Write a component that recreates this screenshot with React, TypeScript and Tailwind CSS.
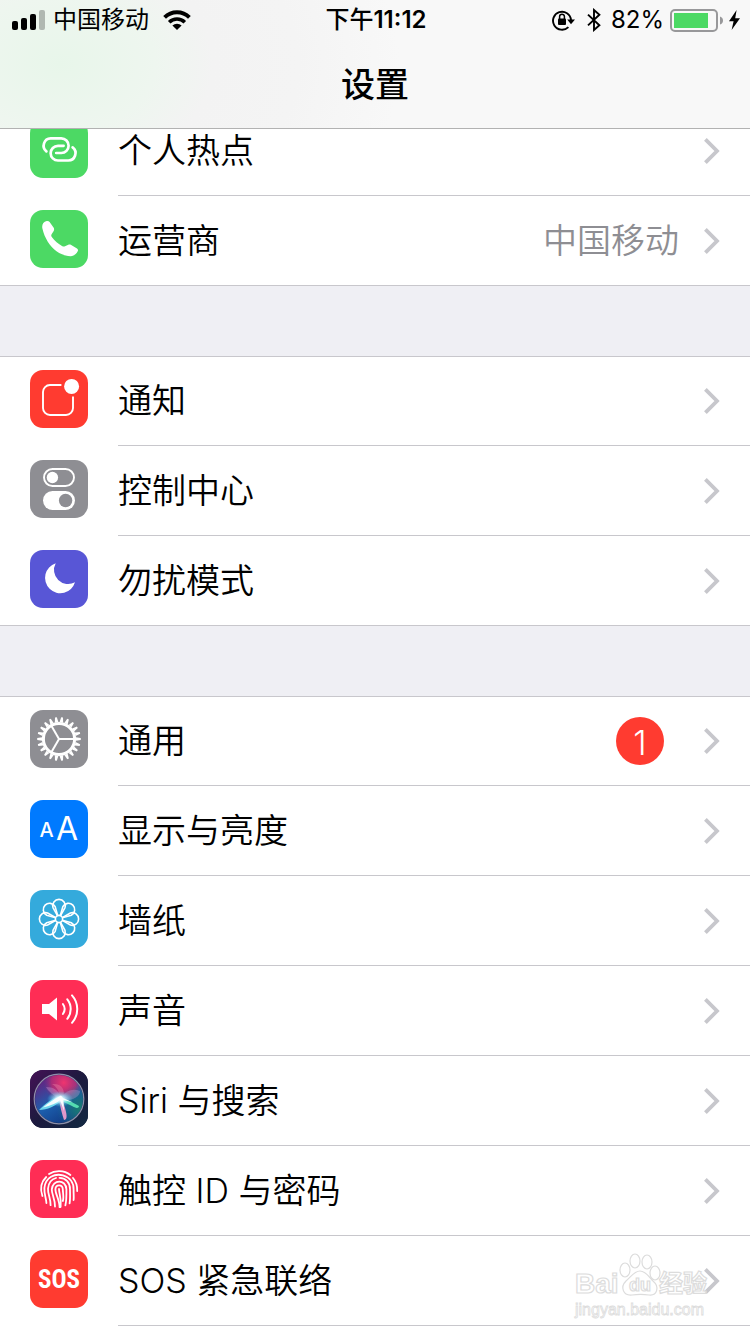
import type { ReactNode } from "react";

type Item = {
  label: string;
  tile: string;
  icon: ReactNode;
  value?: string;
  badge?: number;
};

const gearTeeth = Array.from({ length: 22 }, (_, i) => (i * 360) / 22);
const petals = [0, 45, 90, 135, 180, 225, 270, 315];

function Glyph({ children }: { children: ReactNode }) {
  return (
    <svg viewBox="0 0 58 58" className="size-full" fill="none" aria-hidden="true">
      {children}
    </svg>
  );
}

const hotspotIcon = (
  <Glyph>
    <g stroke="#fff" strokeWidth="2.7" strokeLinecap="round">
      <path d="M16.4 31.4A7.3 7.3 0 0 1 20.7 18.4H31.3A7.3 7.3 0 0 1 31.3 33H26.2" />
      <path d="M42.6 27.4A7.3 7.3 0 0 1 38.3 40.5H28A7.3 7.3 0 0 1 28 25.8H33.6" />
    </g>
  </Glyph>
);

const phoneIcon = (
  <Glyph>
    <path
      fill="#fff"
      d="M16.7 11C18 10.8 19 11.2 19.6 12L23.7 17.8C24.3 18.9 24.2 20 23.7 21L21.6 24.2C21 25.2 21.2 26.2 21.8 27.1C24.5 31 28.6 34.2 32 36C33.1 36.6 34 36.7 35 36.3L38.3 34.7C39.2 34.3 40 34.3 40.8 34.8L47 38.6C48 39.3 48.3 40.2 47.7 41.3C46.2 44.3 43.4 46.3 40.5 46.2C35.5 46 30.5 44.3 26.5 41.3C20 36.5 14.5 28 12.4 18.5C11.6 14.8 13.2 11.7 16.7 11Z"
    />
  </Glyph>
);

const notificationIcon = (
  <Glyph>
    <path
      stroke="#fff"
      strokeWidth="1.9"
      d="M31.4 15H20A7 7 0 0 0 13 22V38A7 7 0 0 0 20 45H36A7 7 0 0 0 43 38V26.6"
    />
    <circle cx="41.6" cy="16.4" r="7.5" fill="#fff" />
  </Glyph>
);

const controlIcon = (
  <Glyph>
    <rect x="14" y="9" width="30" height="17" rx="8.5" stroke="#fff" strokeWidth="1.9" />
    <circle cx="22.4" cy="17.5" r="5.7" fill="#fff" />
    <rect x="13" y="31" width="32" height="19" rx="9.5" fill="#fff" />
    <circle cx="35.6" cy="40.5" r="6.7" fill="#8e8e93" />
  </Glyph>
);

const moonIcon = (
  <Glyph>
    <path fill="#fff" d="M25.7 13.3A15.3 15.3 0 1 0 45 32.3A14.1 14.1 0 0 1 25.7 13.3Z" />
  </Glyph>
);

const gearIcon = (
  <Glyph>
    <circle cx="29" cy="29" r="15.6" stroke="#fff" strokeWidth="3" />
    {gearTeeth.map((angle) => (
      <path key={angle} fill="#fff" d="M45.8 27.2L50.8 28.1V29.9L45.8 30.8Z" transform={`rotate(${angle} 29 29)`} />
    ))}
    <g stroke="#fff" strokeWidth="2">
      <path d="M29 29H44" />
      <path d="M29 29L21.5 16" />
      <path d="M29 29L21.5 42" />
    </g>
  </Glyph>
);

const displayIcon = (
  <Glyph>
    <text x="9.5" y="37" fill="#fff" fontSize="20" fontWeight="500">A</text>
    <text x="26" y="40" fill="#fff" fontSize="32" fontWeight="400">A</text>
  </Glyph>
);

const wallpaperIcon = (
  <Glyph>
    <g stroke="#fff" strokeWidth="1.6">
      {petals.map((angle) => (
        <path
          key={angle}
          d="M27.6 25.8L23 17.6A6.3 6.3 0 1 1 35 17.6L30.4 25.8"
          transform={`rotate(${angle} 29 29)`}
        />
      ))}
      <circle cx="29" cy="29" r="3.6" />
    </g>
  </Glyph>
);

const soundIcon = (
  <Glyph>
    <path fill="#fff" d="M12 24H19L27 17.6V40.4L19 34H12Z" />
    <g stroke="#fff" strokeWidth="2" strokeLinecap="round">
      <path d="M32.9 24A8.6 8.6 0 0 1 32.9 34" />
      <path d="M37.3 19.4A15.5 15.5 0 0 1 37.3 38.8" />
      <path d="M42 15.4A20.5 20.5 0 0 1 42 42.8" />
    </g>
  </Glyph>
);

const siriIcon = (
  <Glyph>
    <defs>
      <linearGradient id="siri-bg" x1="0" y1="0" x2="1" y2="1">
        <stop offset="0" stopColor="#451156" />
        <stop offset="0.5" stopColor="#1c1a3e" />
        <stop offset="1" stopColor="#122a42" />
      </linearGradient>
      <linearGradient id="siri-orb" x1="0.1" y1="0.2" x2="0.6" y2="1">
        <stop offset="0" stopColor="#5b2a86" />
        <stop offset="0.5" stopColor="#1c5fae" />
        <stop offset="1" stopColor="#123c86" />
      </linearGradient>
      <radialGradient id="siri-red" cx="0.6" cy="0.16" r="0.42">
        <stop offset="0" stopColor="#f0356f" />
        <stop offset="0.6" stopColor="#c22a72" stopOpacity="0.8" />
        <stop offset="1" stopColor="#8a2a80" stopOpacity="0" />
      </radialGradient>
      <radialGradient id="siri-teal" cx="0.95" cy="0.7" r="0.5">
        <stop offset="0" stopColor="#19806f" />
        <stop offset="1" stopColor="#177c83" stopOpacity="0" />
      </radialGradient>
      <radialGradient id="siri-glow">
        <stop offset="0" stopColor="#fff" />
        <stop offset="0.35" stopColor="#c9f6ff" stopOpacity="0.85" />
        <stop offset="1" stopColor="#4bd6f5" stopOpacity="0" />
      </radialGradient>
    </defs>
    <rect width="58" height="58" fill="url(#siri-bg)" />
    <circle cx="29" cy="29" r="24" fill="url(#siri-orb)" />
    <circle cx="29" cy="29" r="24" fill="url(#siri-red)" />
    <circle cx="29" cy="29" r="24" fill="url(#siri-teal)" />
    <path fill="#d9a5dc" fillOpacity="0.35" d="M30 29C24 26 18 21 16 17C23 17 29 20 31 28Z" />
    <path fill="#f08fb0" fillOpacity="0.35" d="M30 28C29 21 27 17 22 14C31 13 36 19 33 28Z" />
    <path fill="#b6a4d8" fillOpacity="0.35" d="M31 27C37 20 43 18 50 21C50 27 42 31 32 30Z" />
    <path fill="#7be9f7" fillOpacity="0.85" d="M30 26C22 28 15 34 9 40C17 40 26 36 32 30Z" />
    <path fill="#f59fd0" fillOpacity="0.9" d="M29 29C30 36 32 44 34 50C37 50 37 46 36 42C35 37 33 32 32 29Z" />
    <path fill="#5ff0b9" fillOpacity="0.85" d="M31 27C37 30 44 33 49 36C49 39 45 38 42 36C38 34 33 32 31 30Z" />
    <ellipse cx="30" cy="29" rx="13" ry="8" fill="url(#siri-glow)" />
    <path fill="#fff" fillOpacity="0.9" d="M31 25.5C24 29 18 33 13 37.5C21 35.5 27 33 30 30L34 41L33.4 30L43 32.5L33 28Z" />
    <circle cx="29" cy="29" r="24.8" stroke="#a9adc4" strokeOpacity="0.8" strokeWidth="1.2" />
  </Glyph>
);

const touchIcon = (
  <Glyph>
    <g stroke="#fff" strokeWidth="1.8" strokeLinecap="round">
      <path d="M19 14C25 10 34 10 40.4 15" />
      <path d="M12.4 36C10 29 11 22 16.2 17" />
      <path d="M43 18C46.5 22 47.4 26 47.2 31" />
      <path d="M16.4 43C16.2 38 14 34 14.4 28C15.5 17 25 13.2 33 15.4C40 17.4 44 23 43.6 30C43.5 34 44 37 43.6 40" />
      <path d="M20.6 45.2C20.8 38 17.6 34 18 28.6C18.6 22.5 22 19 26 18" />
      <path d="M29.5 17.8C36 18 40 22.5 40 29C40 34 40.4 39 39.6 43.4" />
      <path d="M25 46.6C25.2 39 21.6 34 21.8 29.4C22.4 19.2 36 19 36.4 29.2C36.5 35 36.6 40 35.4 45.4" />
      <path d="M29.6 47.2C29.6 40 25.4 34 25.4 29.4C25.6 24 32.6 24 32.8 29.4C33 34 34 38.5 32.8 41" />
      <path d="M29 29C29 34 31.6 38 30.6 47" />
    </g>
  </Glyph>
);

const sosIcon = (
  <Glyph>
    <text
      x="29"
      y="38"
      fill="#fff"
      fontSize="25"
      fontWeight="700"
      textAnchor="middle"
      className="font-['Roboto_Condensed','Open_Sans_Condensed','Roboto',sans-serif]"
    >
      SOS
    </text>
  </Glyph>
);

const groups: Item[][] = [
  [
    { label: "个人热点", tile: "bg-[#4cd964]", icon: hotspotIcon },
    { label: "运营商", tile: "bg-[#4cd964]", icon: phoneIcon, value: "中国移动" },
  ],
  [
    { label: "通知", tile: "bg-[#ff3b30]", icon: notificationIcon },
    { label: "控制中心", tile: "bg-[#8e8e93]", icon: controlIcon },
    { label: "勿扰模式", tile: "bg-[#5856d6]", icon: moonIcon },
  ],
  [
    { label: "通用", tile: "bg-[#8e8e93]", icon: gearIcon, badge: 1 },
    { label: "显示与亮度", tile: "bg-[#007aff]", icon: displayIcon },
    { label: "墙纸", tile: "bg-[#34aadc]", icon: wallpaperIcon },
    { label: "声音", tile: "bg-[#ff2d55]", icon: soundIcon },
    { label: "Siri 与搜索", tile: "bg-[#1c1a3e]", icon: siriIcon },
    { label: "触控 ID 与密码", tile: "bg-[#ff2d55]", icon: touchIcon },
    { label: "SOS 紧急联络", tile: "bg-[#ff3b30]", icon: sosIcon },
  ],
];

function StatusBar() {
  return (
    <div className="grid h-10 grid-cols-[1fr_auto_1fr] items-center pr-[10px] pl-3 text-2xl">
      <div className="flex items-center">
        <svg viewBox="0 0 33 20" className="mr-2 h-5 w-[33px]" aria-hidden="true">
          <rect x="0" y="11" width="6" height="9" rx="2" />
          <rect x="9" y="8" width="6" height="12" rx="2" />
          <rect x="18" y="4" width="6" height="16" rx="2" />
          <rect x="27" y="0" width="6" height="20" rx="2" fill="#b0b8b1" />
        </svg>
        <span>中国移动</span>
        <svg viewBox="0 0 28 20" className="ml-[14px] h-5 w-7" fill="none" aria-hidden="true">
          <path d="M1.6 7.4A17.6 17.6 0 0 1 26.4 7.4" stroke="#000" strokeWidth="3.9" />
          <path d="M6.2 12.2A11 11 0 0 1 21.8 12.2" stroke="#000" strokeWidth="3.6" />
          <path d="M14 20L9.4 15.6A6.6 6.6 0 0 1 18.6 15.6Z" fill="#000" />
        </svg>
      </div>
      <time className="font-medium">
        下午<span className="font-semibold">11:12</span>
      </time>
      <div className="flex items-center justify-end">
        <svg viewBox="0 0 23 22" className="mr-3 h-[22px] w-[23px]" fill="none" aria-hidden="true">
          <path d="M16.4 18.1A9 9 0 1 1 19 11" stroke="#000" strokeWidth="1.9" />
          <path d="M15.2 10.4H23L19 15.2Z" fill="#000" />
          <rect x="6" y="9.6" width="8" height="6.4" rx="1" fill="#000" />
          <path d="M7.6 10V7.6A2.4 2.4 0 0 1 12.4 7.6V10" stroke="#000" strokeWidth="1.5" />
        </svg>
        <svg viewBox="0 0 14 24" className="mr-[10px] h-6 w-[14px]" fill="none" aria-hidden="true">
          <path d="M1 6.6L12.4 17.3L7 22V2L12.4 6.7L1 17.4" stroke="#000" strokeWidth="1.9" />
        </svg>
        <span>82%</span>
        <svg viewBox="0 0 53 23" className="ml-[6px] h-[23px] w-[53px]" fill="none" aria-hidden="true">
          <rect x="1" y="1" width="46" height="21" rx="4" stroke="#98989a" strokeWidth="2" />
          <rect x="4" y="4" width="34" height="15" fill="#4cd964" />
          <path d="M50 7.5Q53 8.5 53 11.5T50 15.5Z" fill="#98989a" />
        </svg>
        <svg viewBox="0 0 11 20" className="ml-[6px] h-5 w-[11px]" aria-hidden="true">
          <path d="M7.6 0L0 11.2H4.6L2.6 20L11 8.2H6.2Z" />
        </svg>
      </div>
    </div>
  );
}

function Chevron() {
  return (
    <svg viewBox="0 0 16 26" className="h-[26px] w-4 shrink-0" fill="none" aria-hidden="true">
      <path d="M1.4 1.4L13 13L1.4 24.6" stroke="#c7c7cc" strokeWidth="3.8" />
    </svg>
  );
}

function Row({ item, last }: { item: Item; last: boolean }) {
  return (
    <li className={last ? "border-b border-[#c8c7cc]" : ""}>
      <a href="#" className="flex items-center pl-[30px]">
        <span className={`mb-1 size-[58px] shrink-0 overflow-hidden rounded-[13px] ${item.tile}`}>{item.icon}</span>
        <span
          className={`ml-[30px] flex flex-1 items-center pr-[30px] ${
            last ? "h-[89px]" : "h-[90px] border-b border-[#c8c7cc]"
          }`}
        >
          <span className="flex-1">{item.label}</span>
          {item.value && <span className="mr-[25px] text-[#8e8e93]">{item.value}</span>}
          {item.badge && (
            <span className="mr-10 grid size-12 place-items-center rounded-full bg-[#ff3b30] text-white">
              {item.badge}
            </span>
          )}
          <Chevron />
        </span>
      </a>
    </li>
  );
}

function Watermark() {
  return (
    <svg
      viewBox="0 0 140 68"
      className="pointer-events-none absolute right-[38px] bottom-[13px] h-[68px] w-[140px] font-['Liberation_Sans','Noto_Sans_CJK_SC',sans-serif]"
      fill="#fff"
      fillOpacity="0.6"
      stroke="#dcdcdc"
      strokeWidth="1.2"
    >
      <text x="3" y="40" fontSize="28" fontWeight="700">Bai</text>
      <ellipse cx="53" cy="17" rx="5" ry="7" />
      <ellipse cx="63" cy="8" rx="5" ry="7" />
      <ellipse cx="75" cy="9" rx="5" ry="7" />
      <ellipse cx="83" cy="20" rx="5" ry="7" />
      <path d="M68 18C74 18 77 24 81 28C88 34 85 43 77 42C71 41 66 41 60 42C51 43 48 34 54 28C59 24 62 18 68 18Z" />
      <text x="57" y="38" fontSize="18" fontWeight="700">du</text>
      <text x="87" y="39" fontSize="24" fontWeight="700">经验</text>
      <text x="3" y="62" fontSize="16" strokeWidth="0.8">jingyan.baidu.com</text>
    </svg>
  );
}

export default function App() {
  return (
    <div className="flex min-h-screen flex-col bg-[#efeff4] font-['Inter','Noto_Sans_CJK_SC',sans-serif] text-black">
      <header className="sticky top-0 z-10 border-b border-[#b2b2b2] bg-[#f8f8f8] bg-[radial-gradient(ellipse_340px_240px_at_60px_64px,#e8f6ea_0%,#eef6ef_28%,#f3f3f3_45%,#f4f4f4_70%,#f8f8f8_100%)]">
        <StatusBar />
        <h1 className="grid h-22 place-items-center text-[34px] font-medium">设置</h1>
      </header>
      {/* the list is scrolled a little way under the header */}
      <main className="relative -mt-[23px] flex flex-1 flex-col gap-[70px] text-[34px] font-[350]">
        {groups.map((items, g) => {
          const tail = g === groups.length - 1;
          return (
            <section key={items[0].label} className={`border-t border-[#c8c7cc] bg-white ${tail ? "flex-1" : ""}`}>
              <ul className="-mt-px">
                {items.map((item, i) => (
                  <Row key={item.label} item={item} last={!tail && i === items.length - 1} />
                ))}
              </ul>
            </section>
          );
        })}
        <Watermark />
      </main>
    </div>
  );
}
